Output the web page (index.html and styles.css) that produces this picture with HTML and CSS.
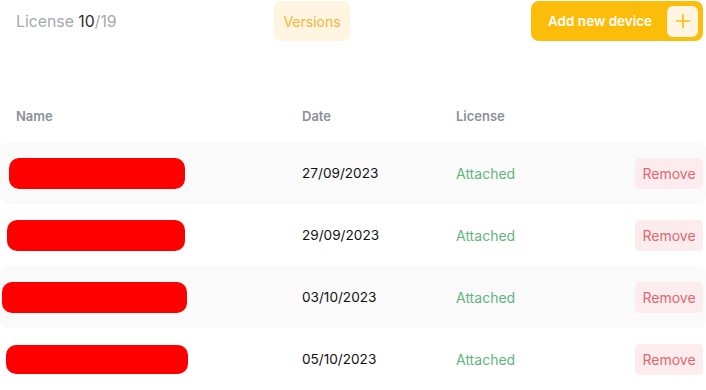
FILE: index.html
```html
<!DOCTYPE html>
<html lang="en">
<head>
    <meta charset="UTF-8">
    <meta name="viewport" content="width=device-width, initial-scale=1.0">
    <title>Devices</title>
    <link rel="stylesheet" href="styles.css">
</head>
<body>
    <div class="topbar">
        <div class="license-count">License <b>10</b>/19</div>
        <button class="versions-btn">Versions</button>
        <button class="add-btn">Add new device <span class="plus-box"><svg width="16" height="16" viewBox="0 0 16 16"><path d="M8 1v14M1 8h14" stroke="#fbbc0a" stroke-width="1.6" fill="none"/></svg></span></button>
    </div>
    <div class="devices">
        <div class="row head">
            <div class="cell name">Name</div>
            <div class="cell">Date</div>
            <div class="cell">License</div>
            <div class="cell"></div>
        </div>
        <div class="row striped">
            <div class="cell name"><span class="redact r1"></span></div>
            <div class="cell date">27/09/2023</div>
            <div class="cell status">Attached</div>
            <div class="cell"><button class="remove-btn">Remove</button></div>
        </div>
        <div class="row">
            <div class="cell name"><span class="redact r2"></span></div>
            <div class="cell date">29/09/2023</div>
            <div class="cell status">Attached</div>
            <div class="cell"><button class="remove-btn">Remove</button></div>
        </div>
        <div class="row striped">
            <div class="cell name"><span class="redact r3"></span></div>
            <div class="cell date">03/10/2023</div>
            <div class="cell status">Attached</div>
            <div class="cell"><button class="remove-btn">Remove</button></div>
        </div>
        <div class="row">
            <div class="cell name"><span class="redact r4"></span></div>
            <div class="cell date">05/10/2023</div>
            <div class="cell status">Attached</div>
            <div class="cell"><button class="remove-btn">Remove</button></div>
        </div>
    </div>
</body>
</html>
```

FILE: styles.css
```css
body {
    font-family: Inter, "Noto Sans", sans-serif;
    color: #111111;
    margin: 0;
    padding: 0;
    background: #ffffff;
}
button {
    font-family: inherit;
    border: none;
    cursor: pointer;
}
.topbar {
    display: flex;
    align-items: center;
    height: 42px;
    padding: 0 3px 0 16px;
}
.license-count {
    font-size: 15.8px;
    color: #a4a8ae;
    width: 258px;
}
.license-count b {
    font-weight: 400;
    color: #2b2b2b;
}
.versions-btn {
    background: #fff5e0;
    color: #f3b43a;
    font-size: 14px;
    height: 40px;
    width: 76px;
    border-radius: 6px;
    padding: 0;
}
.add-btn {
    margin-left: auto;
    display: flex;
    align-items: center;
    justify-content: space-between;
    width: 172px;
    height: 40px;
    background: #fbbc0a;
    color: #ffffff;
    font-size: 13.5px;
    font-weight: 600;
    border-radius: 8px;
    padding: 0 5px 0 17px;
}
.plus-box {
    display: flex;
    align-items: center;
    justify-content: center;
    width: 31px;
    height: 31px;
    background: #fff5e0;
    border-radius: 6px;
}
.devices {
    margin-top: 61px;
}
.row {
    display: grid;
    grid-template-columns: 302px 154px 1fr auto;
    align-items: center;
    height: 62px;
    padding-right: 3px;
    border-radius: 8px;
}
.row.head {
    height: 26px;
    margin-bottom: 13px;
    font-size: 13px;
    font-weight: 600;
    color: #8b9099;
}
.row.head .name {
    padding-left: 16px;
}
.striped {
    background: #fafafa;
}
.date {
    font-size: 13.6px;
    color: #111111;
}
.status {
    font-size: 14px;
    color: #62b47f;
}
.remove-btn {
    background: #fdeced;
    color: #df6670;
    font-size: 14px;
    height: 31px;
    width: 68px;
    border-radius: 5px;
    padding: 0;
}
.redact {
    display: block;
    height: 31px;
    background: #ff0000;
    border-radius: 10px;
}
.r1 {
    margin-left: 9px;
    width: 176px;
}
.r2 {
    margin-left: 7px;
    width: 178px;
}
.r3 {
    margin-left: 2px;
    width: 185px;
}
.r4 {
    margin-left: 6px;
    width: 182px;
    height: 29px;
}
```
